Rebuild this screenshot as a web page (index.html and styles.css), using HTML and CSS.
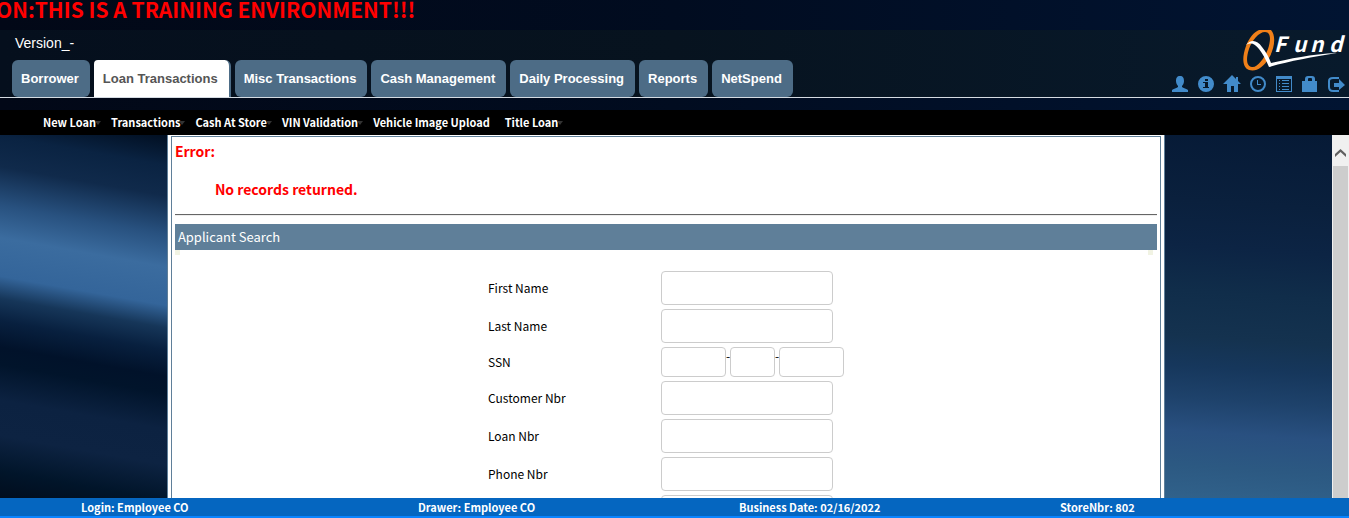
FILE: index.html
```html
<!DOCTYPE html>
<html lang="en">
<head>
<meta charset="utf-8">
<title>QFund - Applicant Search</title>
<link rel="stylesheet" href="styles.css">
</head>
<body>
<div class="ticker"><span class="ticker-text">ON:THIS IS A TRAINING ENVIRONMENT!!!</span></div>
<header class="header">
  <div class="header-main">
    <div class="version">Version_-</div>
    <nav class="tabs">
      <a class="tab" href="#">Borrower</a>
      <a class="tab active" href="#">Loan Transactions</a>
      <a class="tab" href="#">Misc Transactions</a>
      <a class="tab" href="#">Cash Management</a>
      <a class="tab" href="#">Daily Processing</a>
      <a class="tab" href="#">Reports</a>
      <a class="tab" href="#">NetSpend</a>
    </nav>
  </div>
  <div class="header-side">
    <svg class="logo" viewBox="0 0 106 42" role="img" aria-label="QFund">
      <path fill="#f08019" fill-rule="evenodd" d="M17 0H29C34 5 33 18 27 28C21 38 14 42 7 40C0 37 0 27 4 16C7 8 12 2 17 0ZM23 2C17 2 10 10 7 19C4 28 4 36 10 37C15 38 22 29 26 19C29 10 29 2 23 2Z"/>
      <path fill="#fff" d="M4 15C9 9 15 10 20 17C24 22 27 27 29 33C47 29 69 24 95 23C70 27 48 31 27 37C24 30 21 24 17 19C13 14 9 12 4 15Z"/>
      <g class="logo-text"><text x="32" y="22">F</text><text x="51" y="22">u</text><text x="68" y="22">n</text><text x="87" y="22">d</text></g>
    </svg>
    <div class="tools">
      <a href="#" aria-label="User"><svg viewBox="0 0 16 16"><path d="M8 0C5 0 4 2 4 5C4 7 5 9 6 10V11C5 12 1 13 0 14V16H16V14C15 13 11 12 10 11V10C11 9 12 7 12 5C12 2 11 0 8 0Z"/></svg></a>
      <a href="#" aria-label="Information"><svg viewBox="0 0 16 16"><path fill-rule="evenodd" d="M8 0A8 8 0 1 0 8 16A8 8 0 1 0 8 0ZM7 3H10V5H7ZM5 6H10V11H11V12H5V11H7V7H5Z"/></svg></a>
      <a href="#" aria-label="Home"><svg viewBox="0 0 16 16"><path d="M8 -1L12 3V1H14V5L17 8H14V16H10V10H7V16H3V8H-1Z"/></svg></a>
      <a href="#" aria-label="Clock"><svg viewBox="0 0 16 16"><circle cx="8" cy="8" r="7" fill="none" stroke="#428bca" stroke-width="2"/><path d="M7 4H8V8H11V9H7Z"/></svg></a>
      <a href="#" aria-label="List"><svg viewBox="0 0 16 16"><path fill-rule="evenodd" d="M0 0H16V16H0ZM1 3V15H15V3Z"/><path d="M3 4H4V5H3ZM6 4H13V5H6ZM3 7H4V8H3ZM6 7H13V8H6ZM3 10H4V11H3ZM6 10H13V11H6ZM3 13H4V14H3ZM6 13H13V14H6Z"/></svg></a>
      <a href="#" aria-label="Lock"><svg viewBox="0 0 16 16"><path fill-rule="evenodd" d="M3 5V3Q3 0 6 0H10Q13 0 13 3V5H15V16H0V5ZM6 5H10V3Q10 2 9 2H7Q6 2 6 3Z"/></svg></a>
      <a href="#" aria-label="Log out"><svg viewBox="0 0 16 16"><path d="M11 2H5Q1 2 1 5V11Q1 15 5 15H11" fill="none" stroke="#428bca" stroke-width="2"/><path d="M6 7H11V3L17 9L11 14V11H6Z"/></svg></a>
    </div>
  </div>
</header>
<nav class="menu">
  <a class="caret" href="#">New Loan</a>
  <a class="caret" href="#">Transactions</a>
  <a class="caret" href="#">Cash At Store</a>
  <a class="caret" href="#">VIN Validation</a>
  <a href="#">Vehicle Image Upload</a>
  <a class="caret" href="#">Title Loan</a>
</nav>
<div class="viewport">
  <div class="backdrop left"></div>
  <main class="panel">
    <div class="panel-inner">
      <p class="error">Error:</p>
      <p class="error message">No records returned.</p>
      <hr class="rule">
      <h1 class="section-title">Applicant Search</h1>
      <div class="corners"><i></i><i></i></div>
      <form class="form">
        <label for="first">First Name</label><input id="first" type="text">
        <label for="last">Last Name</label><input id="last" type="text">
        <label for="ssn1">SSN</label>
        <div class="ssn"><input id="ssn1" type="text"><span>-</span><input class="short" type="text" aria-label="SSN middle digits"><span>-</span><input type="text" aria-label="SSN last digits"></div>
        <label for="customer">Customer Nbr</label><input id="customer" type="text">
        <label for="loan">Loan Nbr</label><input id="loan" type="text">
        <label for="phone">Phone Nbr</label><input id="phone" type="text">
        <span></span><input type="text" aria-label="Additional search value">
      </form>
    </div>
  </main>
  <div class="backdrop right"></div>
  <div class="scrollbar">
    <button type="button" class="scroll-up" aria-label="Scroll up"><svg viewBox="0 0 17 31"><path d="M3 22V19L8.500 14L14 19V22L8.500 17Z"/></svg></button>
    <div class="thumb"></div>
  </div>
</div>
<footer class="status">
  <span>Login: Employee CO</span><span>Drawer: Employee CO</span><span>Business Date: 02/16/2022</span><span>StoreNbr: 802</span>
</footer>
</body>
</html>
```
FILE: styles.css
```css
* { box-sizing: border-box; }
body {
  margin: 0;
  height: 100vh;
  display: flex;
  flex-direction: column;
  overflow: hidden;
  background: linear-gradient(90deg, #020817, #010c20 50%, #011432);
  font-family: "Noto Sans CJK JP", "Noto Sans", sans-serif;
}
a { text-decoration: none; color: inherit; }
.ticker { height: 30px; overflow: hidden; flex: none; }
.ticker-text {
  display: block;
  margin-left: -4px;
  color: #f00;
  font-size: 21px;
  font-weight: 700;
  line-height: 18px;
  white-space: nowrap;
}
.header {
  flex: none;
  display: flex;
  justify-content: space-between;
  border-bottom: 1px solid #d5dbe2;
  background: linear-gradient(90deg, #050f1d, #07131f 50%, #081a2c);
}
.header-main { padding-left: 12px; }
.version {
  padding: 3px 3px 7px;
  color: #fff;
  font: 14px/20px "Liberation Sans", Arial, sans-serif;
}
.tabs { display: flex; gap: 4px; }
.tab {
  padding: 0 11px 0 9px;
  border-radius: 6px;
  background: #4d6c86;
  color: #fff;
  font: bold 13px/37px "Liberation Sans", Arial, sans-serif;
  white-space: nowrap;
}
.tab.active {
  border-right: 2px solid #4d6c86;
  border-radius: 4px 6px 0 0;
  background: #fff;
  color: #555;
}
.header-side {
  display: flex;
  flex-direction: column;
  align-items: flex-end;
  gap: 4px;
  padding-right: 5px;
}
.logo { width: 106px; height: 42px; margin-right: -4px; }
.logo-text {
  fill: #fff;
  font: italic bold 21px "Noto Sans CJK JP", sans-serif;
}
.tools { display: flex; gap: 10px; }
.tools svg { display: block; width: 16px; height: 16px; fill: #428bca; overflow: visible; }
.menu {
  flex: none;
  display: flex;
  gap: 15px;
  margin-top: 12px;
  padding-left: 43px;
  background: #000;
  color: #fff;
  font-size: 11px;
  font-weight: 700;
  line-height: 25px;
}
.menu a { position: relative; white-space: nowrap; }
.caret::after {
  content: "";
  position: absolute;
  left: 100%;
  top: 11px;
  margin-left: -1px;
  border: 3px solid transparent;
  border-top: 4px solid #333;
  border-bottom: 0;
}
.viewport { flex: 1; min-height: 0; display: flex; overflow: hidden; }
.backdrop { flex: 1; }
.backdrop.left {
  background: linear-gradient(190deg, #010f22 0, #0a2342 30px, #102a4b 60px, #28517f 98px, #3b6c9f 130px, #34659a 168px, #163659 190px, #08203f 212px, #01122a 238px, #01142b 255px, #0c2241 290px, #0d2342 325px, #01152a 360px, #010c1c 390px);
}
.backdrop.right {
  background: linear-gradient(184deg, #061a36 0, #0a203d 75px, #0c2444 120px, #102d4a 165px, #14324f 210px, #16375c 240px, #1e426b 272px, #295080 305px, #2c5982 340px, #31628b 375px);
}
.panel {
  width: 74%;
  padding: 1px 3px 0;
  border: 1px solid #5f7f99;
  border-width: 0 1px;
  background: #fff;
}
.panel-inner {
  height: 100%;
  padding: 4px 3px 0;
  border: 1px solid #5f7f99;
  border-bottom: 0;
}
.error { margin: 0; color: #f00; font-size: 14px; font-weight: 700; line-height: 20px; }
.message { padding: 18px 0 15px 40px; }
.rule { margin: 0 0 8px; border: 0; border-top: 1px solid #666; border-bottom: 1px solid #eee; }
.section-title {
  margin: 0;
  padding: 0 3px;
  background: #5f7f99;
  color: #fff;
  font-size: 13px;
  font-weight: 400;
  line-height: 26px;
}
.corners { display: flex; justify-content: space-between; padding-right: 4px; }
.corners i { width: 5px; height: 5px; background: #f1f3e3; }
.form {
  display: grid;
  grid-template-columns: 173px 183px;
  row-gap: 4px;
  justify-content: center;
  align-items: center;
  padding-top: 16px;
  font-size: 12px;
  line-height: 20px;
}
.form input {
  width: 172px;
  height: 34px;
  border: 1px solid #ccc;
  border-radius: 4px;
  background: #fff;
}
.ssn { display: flex; line-height: 18px; }
.ssn span { width: 4px; overflow: hidden; }
.form .ssn input { width: 65px; height: 30px; }
.form .ssn .short { width: 45px; }
.scrollbar { width: 17px; display: flex; flex-direction: column; background: #f0f0f0; }
.scroll-up { padding: 0; border: 0; background: none; height: 31px; }
.scroll-up svg { display: block; width: 17px; height: 31px; fill: #606060; }
.thumb { flex: 1; margin: 0 1px; background: #cdcdcd; }
.status {
  flex: none;
  display: grid;
  grid-template-columns: 337fr 321fr 321fr 289fr;
  padding-left: 81px;
  border-bottom: 2px solid #0a84ff;
  background: #0566c0;
  color: #fff;
  font-size: 11px;
  font-weight: 700;
  line-height: 18px;
}
```
